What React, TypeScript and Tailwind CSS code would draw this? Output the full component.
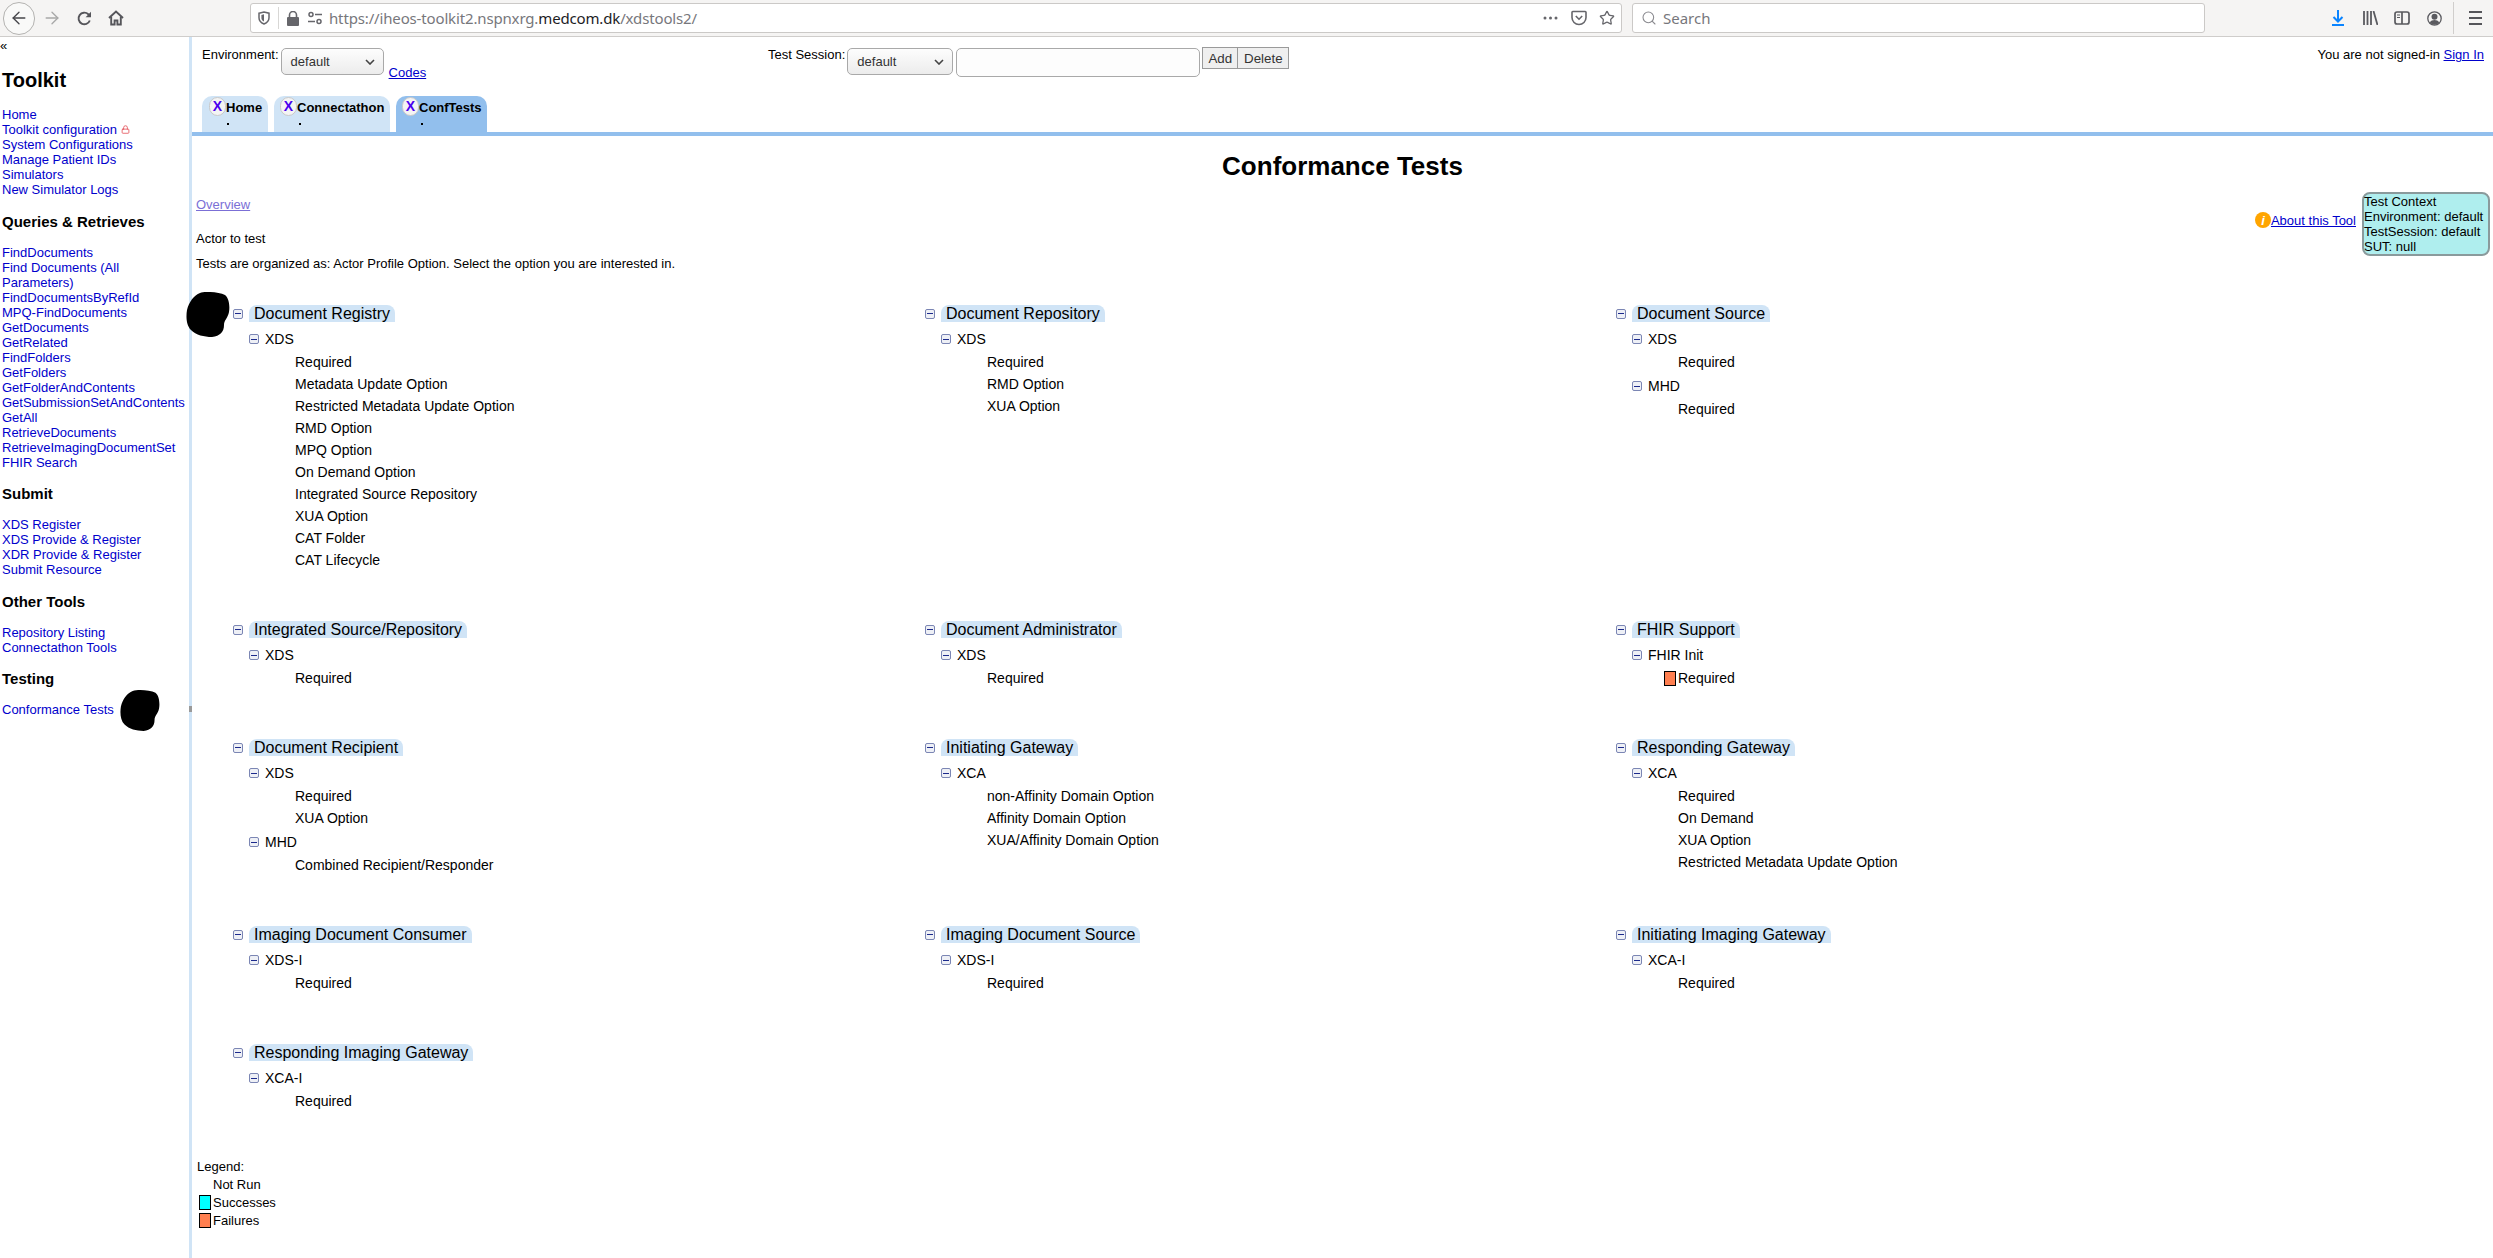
import { ArrowLeft, ArrowRight, Lock, Search, Star } from "lucide-react";

type Section = { profile: string; items: string[] };
type Actor = { name: string; sections: Section[]; col: number };

const SIDEBAR: { title: string; links: string[] }[] = [
  {
    title: "Queries & Retrieves",
    links: [
      "FindDocuments",
      "Find Documents (All Parameters)",
      "FindDocumentsByRefId",
      "MPQ-FindDocuments",
      "GetDocuments",
      "GetRelated",
      "FindFolders",
      "GetFolders",
      "GetFolderAndContents",
      "GetSubmissionSetAndContents",
      "GetAll",
      "RetrieveDocuments",
      "RetrieveImagingDocumentSet",
      "FHIR Search",
    ],
  },
  { title: "Submit", links: ["XDS Register", "XDS Provide & Register", "XDR Provide & Register", "Submit Resource"] },
  { title: "Other Tools", links: ["Repository Listing", "Connectathon Tools"] },
];

const ROWS: Actor[][] = [
  [
    {
      name: "Document Registry",
      col: 0,
      sections: [
        {
          profile: "XDS",
          items: [
            "Required",
            "Metadata Update Option",
            "Restricted Metadata Update Option",
            "RMD Option",
            "MPQ Option",
            "On Demand Option",
            "Integrated Source Repository",
            "XUA Option",
            "CAT Folder",
            "CAT Lifecycle",
          ],
        },
      ],
    },
    {
      name: "Document Repository",
      col: 1,
      sections: [{ profile: "XDS", items: ["Required", "RMD Option", "XUA Option"] }],
    },
    {
      name: "Document Source",
      col: 2,
      sections: [
        { profile: "XDS", items: ["Required"] },
        { profile: "MHD", items: ["Required"] },
      ],
    },
  ],
  [
    { name: "Integrated Source/Repository", col: 0, sections: [{ profile: "XDS", items: ["Required"] }] },
    { name: "Document Administrator", col: 1, sections: [{ profile: "XDS", items: ["Required"] }] },
    { name: "FHIR Support", col: 2, sections: [{ profile: "FHIR Init", items: ["!Required"] }] },
  ],
  [
    {
      name: "Document Recipient",
      col: 0,
      sections: [
        { profile: "XDS", items: ["Required", "XUA Option"] },
        { profile: "MHD", items: ["Combined Recipient/Responder"] },
      ],
    },
    {
      name: "Initiating Gateway",
      col: 1,
      sections: [
        { profile: "XCA", items: ["non-Affinity Domain Option", "Affinity Domain Option", "XUA/Affinity Domain Option"] },
      ],
    },
    {
      name: "Responding Gateway",
      col: 2,
      sections: [
        { profile: "XCA", items: ["Required", "On Demand", "XUA Option", "Restricted Metadata Update Option"] },
      ],
    },
  ],
  [
    { name: "Imaging Document Consumer", col: 0, sections: [{ profile: "XDS-I", items: ["Required"] }] },
    { name: "Imaging Document Source", col: 1, sections: [{ profile: "XDS-I", items: ["Required"] }] },
    { name: "Initiating Imaging Gateway", col: 2, sections: [{ profile: "XCA-I", items: ["Required"] }] },
  ],
  [{ name: "Responding Imaging Gateway", col: 0, sections: [{ profile: "XCA-I", items: ["Required"] }] }],
];

function Collapse() {
  return (
    <span className="flex h-[10px] w-[10px] shrink-0 items-center justify-center rounded-[2px] border border-[#7b86b4] bg-[#eef0f6]">
      <span className="h-px w-[6px] bg-[#1c2a8c]" />
    </span>
  );
}

function StatusBox({ color }: { color: string }) {
  return <span className={`h-[15px] w-[12px] shrink-0 border border-black ${color}`} />;
}

function ActorTree({ actor }: { actor: Actor }) {
  return (
    <div className="text-[14px]">
      <div className="flex h-[17px] items-center">
        <Collapse />
        <div className="ml-[6px] flex h-[17px] items-center rounded-t-[8px] bg-[#d0e4f6] px-[5px] text-[16px] leading-[17px] text-black">
          {actor.name}
        </div>
      </div>
      {actor.sections.map((s, i) => (
        <div key={s.profile}>
          <div className={`flex h-[18px] items-center pl-[16px] ${i === 0 ? "mt-[8px]" : "mt-[4px]"}`}>
            <Collapse />
            <span className="ml-[6px]">{s.profile}</span>
          </div>
          <div className="mt-[3px]">
            {s.items.map((item) => (
              <div key={item} className="flex h-[22px] items-center pl-[48px]">
                {item.startsWith("!") ? <StatusBox color="bg-[#ff7f50]" /> : <span className="w-[12px]" />}
                <span className="ml-[2px]">{item.replace("!", "")}</span>
              </div>
            ))}
          </div>
        </div>
      ))}
    </div>
  );
}

function SidebarLink({ label }: { label: string }) {
  return (
    <a href="#" className="block leading-[15px] text-[#0000cc]">
      {label}
    </a>
  );
}

function Blob({ className }: { className: string }) {
  return (
    <svg className={`absolute ${className}`} viewBox="0 0 44 45" fill="#000">
      <path d="M14 1 C20 -1 33 0 39 3 C43 6 44 14 43 20 C42 26 38 28 38 33 C38 40 34 44 26 45 C18 45 10 43 5 38 C0 33 0 24 1 18 C3 10 8 3 14 1 Z" />
    </svg>
  );
}

function Chrome() {
  return (
    <header className="flex h-[37px] shrink-0 items-center border-b border-[#cfcdcb] bg-[#f5f4f3] text-[#45454a]">
      <div className="ml-[3px] flex h-[33px] w-[32px] items-center justify-center rounded-full border border-[#b4b3b1] bg-[#f9f9f8]">
        <ArrowLeft size={20} strokeWidth={1.6} />
      </div>
      <ArrowRight size={20} strokeWidth={1.6} className="ml-[7px] text-[#a8a8a8]" />
      <svg className="ml-[15px]" width="15" height="15" viewBox="0 0 15 15" fill="none" stroke="#55555a" strokeWidth="1.9">
        <path d="M12.8 9.5A5.8 5.8 0 1 1 11.3 3.2L13 5" />
        <path d="M14 .8V6.2H8.6" fill="#55555a" stroke="none" />
      </svg>
      <svg className="ml-[16px]" width="16" height="16" viewBox="0 0 16 16" fill="none" stroke="#55555a" strokeWidth="1.9">
        <path d="M1 8 8 1.5 15 8" />
        <path d="M3.2 6.8V14.5h3.4v-4h2.8v4h3.4V6.8" />
      </svg>
      <div className="ml-[126px] flex h-[30px] w-[1372px] items-center rounded-[3px] border border-[#cbc9c7] bg-white">
        <svg className="ml-[7px]" width="12" height="14" viewBox="0 0 12 14" fill="none" stroke="#66666b" strokeWidth="1.5">
          <path d="M1 2.2 6 1l5 1.2v4.6C11 10 8.6 12 6 13 3.4 12 1 10 1 6.8Z" />
          <path d="M6 3.2 3.4 3.9v3c0 1.8 1.2 3 2.6 3.7Z" fill="#66666b" stroke="none" />
        </svg>
        <span className="ml-[8px] h-[22px] w-px bg-[#d8d7d5]" />
        <svg className="ml-[8px]" width="12" height="15" viewBox="0 0 12 15" fill="#66666b">
          <rect x="0" y="6" width="12" height="9" rx="1" />
          <path d="M2.5 6V4a3.5 3.5 0 0 1 7 0v2" fill="none" stroke="#66666b" strokeWidth="1.6" />
        </svg>
        <svg className="ml-[9px]" width="14" height="14" viewBox="0 0 14 14" fill="none" stroke="#66666b" strokeWidth="1.5">
          <circle cx="3" cy="3.5" r="2" />
          <path d="M7 3.5h7M0 10.5h7" />
          <circle cx="11" cy="10.5" r="2" />
        </svg>
        <span className="ml-[7px] text-[15px] tracking-[-0.15px] text-[#77777c] [font-family:'Noto_Sans',sans-serif]">
          https://iheos-toolkit2.nspnxrg.<span className="text-[#1c1c1f]">medcom.dk</span>/xdstools2/
        </span>
        <div className="ml-auto flex items-center pr-[6px]">
          <svg width="15" height="4" viewBox="0 0 15 4" fill="#66666b">
            <circle cx="2" cy="2" r="1.5" />
            <circle cx="7.5" cy="2" r="1.5" />
            <circle cx="13" cy="2" r="1.5" />
          </svg>
          <svg className="ml-[13px]" width="16" height="16" viewBox="0 0 16 16" fill="none" stroke="#66666b" strokeWidth="1.6">
            <path d="M1.8 1.5h12.4a.8.8 0 0 1 .8.8V7.5a7 7 0 0 1-14 0V2.3a.8.8 0 0 1 .8-.8Z" />
            <path d="M4.8 6 8 9.2 11.2 6" />
          </svg>
          <Star size={16} strokeWidth={1.9} className="ml-[12px] text-[#66666b]" />
        </div>
      </div>
      <div className="ml-[10px] flex h-[30px] w-[573px] items-center rounded-[3px] border border-[#cbc9c7] bg-white">
        <Search size={16} strokeWidth={1.6} className="ml-[8px] text-[#8a8a8f]" />
        <span className="ml-[6px] text-[15px] text-[#77777c] [font-family:'Noto_Sans',sans-serif]">Search</span>
      </div>
      <svg className="ml-[127px]" width="12" height="16" viewBox="0 0 12 16" fill="none" stroke="#0a84ff" strokeWidth="2">
        <path d="M6 0v11M1.5 7 6 11.5 10.5 7" />
        <path d="M0 15h12" />
      </svg>
      <svg className="ml-[19px]" width="15" height="14" viewBox="0 0 15 14" fill="none" stroke="#5a5a5f" strokeWidth="1.8">
        <path d="M1 0v14M4.5 0v14M8 0v14M10.5 0l4 14" />
      </svg>
      <svg className="ml-[16px]" width="16" height="14" viewBox="0 0 16 14" fill="none" stroke="#5a5a5f" strokeWidth="1.7">
        <rect x="1" y="1" width="14" height="12" rx="2" />
        <path d="M8 1v12" />
        <path d="M3 4h3M3 6.5h3" strokeWidth="1.2" />
      </svg>
      <svg className="ml-[17px]" width="15" height="15" viewBox="0 0 15 15" fill="#5a5a5f">
        <circle cx="7.5" cy="7.5" r="6.7" fill="none" stroke="#5a5a5f" strokeWidth="1.3" />
        <circle cx="7.5" cy="5.8" r="3" />
        <path d="M2.8 11.5c1-2 2.8-2.6 4.7-2.6s3.7.6 4.7 2.6a6 6 0 0 1-9.4 0Z" />
      </svg>
      <span className="ml-[11px] h-[32px] w-px bg-[#d0cecc]" />
      <svg className="ml-[15px]" width="13" height="14" viewBox="0 0 13 14" fill="#55555a">
        <rect y="0" width="13" height="2" />
        <rect y="6" width="13" height="2" />
        <rect y="12" width="13" height="2" />
      </svg>
    </header>
  );
}

export default function App() {
  return (
    <div className="relative flex h-[1258px] w-[2493px] flex-col overflow-hidden bg-white text-[13px] leading-[15px] text-black [font-family:'Liberation_Sans',Arial,sans-serif]">
      <Chrome />
      <div className="flex min-h-0 flex-1">
        <aside className="w-[189px] shrink-0 pl-[2px]">
          <div className="-ml-[2px] mt-[1px] h-[15px] leading-[15px]">«</div>
          <h1 className="mt-[16px] text-[20px] font-bold leading-[23px]">Toolkit</h1>
          <div className="mt-[15px] pb-[1px]">
            <SidebarLink label="Home" />
            <a href="#" className="flex items-center leading-[15px] text-[#0000cc]">
              Toolkit configuration
              <Lock size={9} strokeWidth={2} className="ml-[4px] text-[#e0404a]" />
            </a>
            <SidebarLink label="System Configurations" />
            <SidebarLink label="Manage Patient IDs" />
            <SidebarLink label="Simulators" />
            <SidebarLink label="New Simulator Logs" />
          </div>
          {SIDEBAR.map((g) => (
            <div key={g.title}>
              <h3 className={`mb-[14px] text-[15px] font-bold leading-[18px] ${g.title === "Other Tools" ? "mt-[16px]" : "mt-[15px]"}`}>
                {g.title}
              </h3>
              {g.links.map((l) => (
                <SidebarLink key={l} label={l} />
              ))}
            </div>
          ))}
          <h3 className="mb-[14px] mt-[15px] text-[15px] font-bold leading-[18px]">Testing</h3>
          <SidebarLink label="Conformance Tests" />
        </aside>
        <div className="relative w-[3px] shrink-0 bg-[#d0e4f6]">
          <span className="absolute left-0 top-[669px] h-[6px] w-[3px] bg-[#9a9a9a]" />
        </div>
        <main className="min-w-0 flex-1">
          <div className="flex h-[59px] items-start pl-[10px]">
            <div className="flex w-[566px] items-start pt-[10px]">
              <span>Environment:</span>
              <FormSelect width="w-[103px]" className="ml-[2px] mt-[1px]" />
              <a href="#" className="ml-[5px] mt-[18px] text-[#0000cc] underline">
                Codes
              </a>
            </div>
            <div className="flex items-start pt-[10px]">
              <span>Test Session:</span>
              <FormSelect width="w-[106px]" className="ml-[2px] mt-[1px]" />
              <div className="ml-[3px] mt-[1px] h-[29px] w-[244px] rounded-[5px] border border-[#a9a9a9] bg-[#fdfdfd]" />
              <button className="ml-[2px] h-[22px] w-[36px] border border-[#9a9a9a] bg-[#efefef] text-[13.33px] text-[#333]">Add</button>
              <button className="h-[22px] w-[51px] border border-l-0 border-[#9a9a9a] bg-[#efefef] text-[13.33px] text-[#333]">Delete</button>
            </div>
            <div className="ml-auto pr-[9px] pt-[10px]">
              You are not signed-in{" "}
              <a href="#" className="text-[#0000cc] underline">
                Sign In
              </a>
            </div>
          </div>
          <div className="flex h-[36px] gap-[6px] pl-[10px]">
            <Tab label="Home" width="w-[66px]" inset="pl-[7px]" />
            <Tab label="Connectathon" width="w-[116px]" inset="pl-[6px]" />
            <Tab label="ConfTests" width="w-[91px]" inset="pl-[6px]" active />
          </div>
          <div className="h-[4px] bg-[#92bfed]" />
          <h2 className="mt-[15px] text-center text-[26px] font-bold leading-[30px]">Conformance Tests</h2>
          <div className="relative mt-[16px] pl-[4px]">
            <a href="#" className="text-[#7b6fd6] underline">
              Overview
            </a>
            <div className="mt-[19px]">Actor to test</div>
            <div className="mt-[10px]">Tests are organized as: Actor Profile Option. Select the option you are interested in.</div>
            <div className="absolute right-[3px] top-[-5px] flex items-start">
              <span className="mt-[20px] flex h-[16px] w-[16px] items-center justify-center rounded-full bg-[#ffa500] text-[13px] font-bold italic leading-none text-white">
                i
              </span>
              <a href="#" className="mr-[6px] mt-[21px] text-[#0000cc] underline">
                About this Tool
              </a>
              <div className="h-[64px] w-[128px] rounded-[8px] border-2 border-[#8a9a9c] bg-[#afeeee] leading-[15px]">
                <div>Test Context</div>
                <div>Environment: default</div>
                <div>TestSession: default</div>
                <div>SUT: null</div>
              </div>
            </div>
          </div>
          <div className="mt-[34px] grid grid-cols-[692px_691px_1fr] grid-rows-[316px_118px_187px_118px_114px] pl-[41px]">
            {ROWS.flat().map((actor) => (
              <div key={actor.name} className={actor.col === 0 ? "col-start-1" : actor.col === 1 ? "col-start-2" : "col-start-3"}>
                <ActorTree actor={actor} />
              </div>
            ))}
          </div>
          <div className="pl-[5px]">
            <div className="leading-[17px]">Legend:</div>
            <div className="flex h-[18px] items-center pl-[16px]">Not Run</div>
            <div className="flex h-[18px] items-center pl-[2px]">
              <StatusBox color="bg-[#00ffff]" />
              <span className="ml-[2px]">Successes</span>
            </div>
            <div className="flex h-[18px] items-center pl-[2px]">
              <StatusBox color="bg-[#ff7f50]" />
              <span className="ml-[2px]">Failures</span>
            </div>
          </div>
        </main>
      </div>
      <Blob className="left-[186px] top-[292px] h-[45px] w-[44px]" />
      <Blob className="left-[120px] top-[690px] h-[41px] w-[40px]" />
    </div>
  );
}

function FormSelect({ width, className }: { width: string; className?: string }) {
  return (
    <div className={`flex h-[27px] items-center justify-between rounded-[5px] border border-[#a9a9a9] bg-gradient-to-b from-[#fdfdfd] to-[#ececec] pl-[9px] pr-[8px] text-[#333] ${width} ${className ?? ""}`}>
      <span>default</span>
      <svg width="10" height="6" viewBox="0 0 10 6" fill="none" stroke="#444" strokeWidth="1.6">
        <path d="M1 1l4 4 4-4" />
      </svg>
    </div>
  );
}

function Tab({ label, width, inset, active }: { label: string; width: string; inset: string; active?: boolean }) {
  return (
    <div className={`relative rounded-t-[10px] ${width} ${active ? "bg-[#92bfed]" : "bg-[#d0e4f6]"}`}>
      <div className={`flex items-start pt-[1px] ${inset}`}>
        <span className="flex h-[19px] w-[17px] items-center justify-center rounded-full border border-[#c8c8c8] bg-[#f4f4f4] text-[14px] font-bold text-[#4a00ee]">
          X
        </span>
        <span className="mt-[3px] font-bold">{label}</span>
      </div>
      <span className="absolute bottom-[7px] left-[25px] h-[2px] w-[2px] bg-black" />
    </div>
  );
}
